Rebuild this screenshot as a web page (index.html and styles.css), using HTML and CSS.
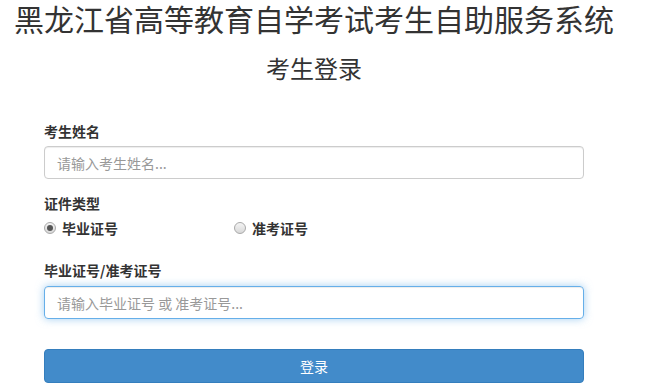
FILE: index.html
```html
<!DOCTYPE html>
<html lang="zh-CN">
<head>
<meta charset="utf-8">
<title>考生登录</title>
<link rel="stylesheet" href="styles.css">
</head>
<body>
<div class="wrap">
  <h1 class="title">黑龙江省高等教育自学考试考生自助服务系统</h1>
  <h2 class="subtitle">考生登录</h2>
  <form class="form">
    <div class="group g-name">
      <label class="lbl">考生姓名</label>
      <div class="input"><span class="ph">请输入考生姓名...</span></div>
    </div>
    <div class="group g-type">
      <label class="lbl">证件类型</label>
      <div class="radios">
        <span class="radio-item"><span class="radio checked"></span><span class="rtext">毕业证号</span></span>
        <span class="radio-item"><span class="radio"></span><span class="rtext">准考证号</span></span>
      </div>
    </div>
    <div class="group g-id">
      <label class="lbl">毕业证号/准考证号</label>
      <div class="input focus"><span class="ph">请输入毕业证号 或 准考证号...</span></div>
    </div>
    <div class="btn">登录</div>
  </form>
</div>
</body>
</html>
```
FILE: styles.css
```css
* { box-sizing: border-box; }
body {
  margin: 0;
  background: #fff;
  color: #333;
  font-family: "Noto Sans CJK SC", "Noto Sans", sans-serif;
  font-size: 14px;
}
.wrap { width: 628px; }
.title {
  margin: 0 -10px;
  font-size: 30px;
  line-height: 36px;
  font-weight: normal;
  text-align: center;
  color: #333;
  white-space: nowrap;
}
.subtitle {
  margin: 17px 0 0;
  font-size: 24px;
  line-height: 30px;
  font-weight: normal;
  text-align: center;
}
.form { margin: 38px 44px 0; }
.lbl {
  display: block;
  font-weight: bold;
  font-size: 14px;
  line-height: 20px;
  margin-bottom: 5px;
}
.input {
  height: 33px;
  border: 1px solid #ccc;
  border-radius: 4px;
  padding: 0 12px;
  display: flex;
  align-items: center;
  box-shadow: inset 0 1px 1px rgba(0,0,0,0.075);
}
.input.focus {
  border-color: #66afe9;
  box-shadow: inset 0 1px 1px rgba(0,0,0,0.075), 0 0 8px rgba(102,175,233,0.6);
}
.ph { color: #999; font-size: 14px; }
.g-type { margin-top: 14px; }
.g-type .lbl { margin-bottom: 5px; }
.radios { display: flex; height: 20px; align-items: center; }
.radio-item { display: flex; align-items: center; font-weight: bold; }
.radio-item:first-child { width: 190px; }
.radio {
  width: 12px;
  height: 12px;
  border-radius: 50%;
  border: 1px solid #a9a9a9;
  background: linear-gradient(#f4f4f4, #d8d8d8);
  margin-right: 6px;
  position: relative;
}
.radio.checked::after {
  content: "";
  position: absolute;
  left: 2px;
  top: 2px;
  width: 6px;
  height: 6px;
  border-radius: 50%;
  background: #555;
}
.g-id { margin-top: 22px; }
.g-id .lbl { margin-bottom: 6px; }
.btn {
  margin-top: 30px;
  height: 34px;
  background: #428bca;
  border: 1px solid #357ebd;
  border-radius: 4px;
  color: #fff;
  text-align: center;
  line-height: 32px;
  font-size: 14px;
}
```
